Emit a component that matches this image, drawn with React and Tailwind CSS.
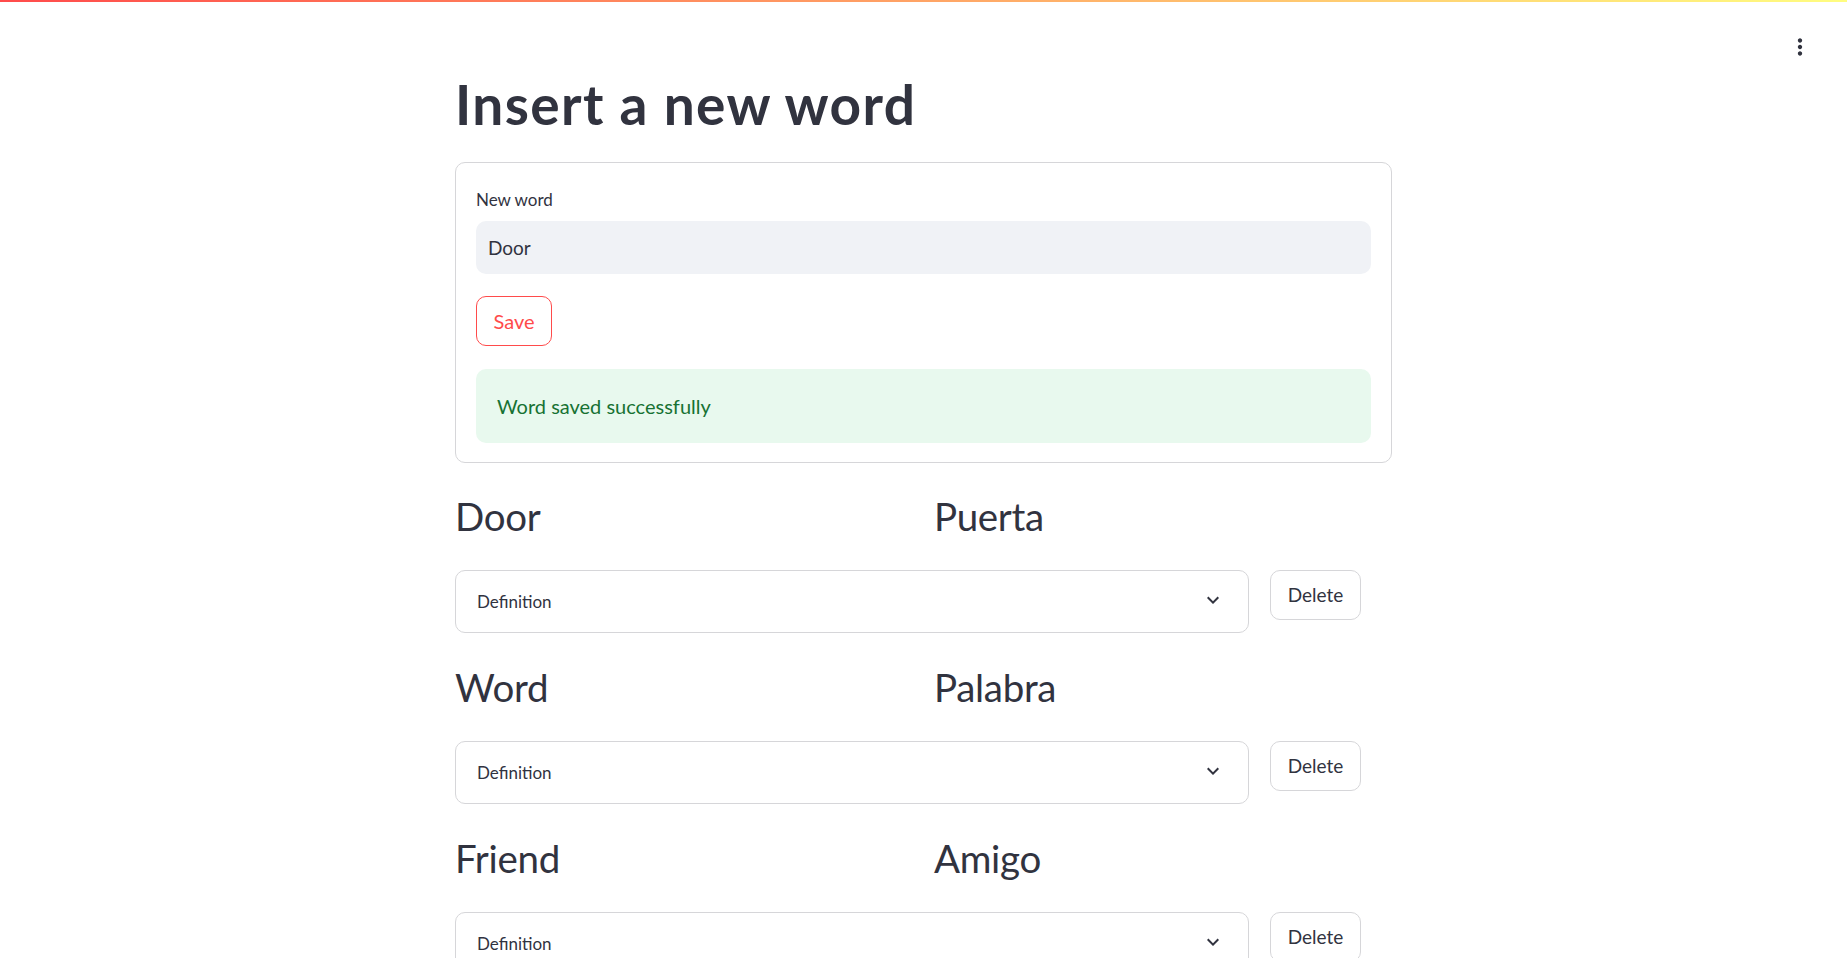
import { useState } from 'react';

const words = [
    { id: 1, word: 'Door', translation: 'Puerta' },
    { id: 2, word: 'Word', translation: 'Palabra' },
    { id: 3, word: 'Friend', translation: 'Amigo' }
];

function ChevronDown() {
    return (
        <svg width="24" height="24" viewBox="0 0 24 24" fill="#31333f" className="mb-[3px]">
            <path d="M16.59 8.59L12 13.17 7.41 8.59 6 10l6 6 6-6z" />
        </svg>
    );
}

function WordRow({ item }) {
    const [open, setOpen] = useState(false);

    return (
        <div className="flex flex-col gap-[29px]">
            <div className="grid grid-cols-2 gap-[21px]">
                <h2 className="text-[38.5px] leading-[50px] font-normal tracking-[-0.3px] text-[#31333f]">{item.word}</h2>
                <h2 className="text-[38.5px] leading-[50px] font-normal tracking-[-0.3px] text-[#31333f]">{item.translation}</h2>
            </div>
            <div className="flex items-start gap-[21px]">
                <div className="w-[794px] border border-[#d6d6d9] rounded-[10px]">
                    <button
                        type="button"
                        onClick={() => setOpen(!open)}
                        className="w-full h-[61px] flex items-center justify-between pl-[21px] pr-[23px]"
                    >
                        <span className="text-[17px] text-[#31333f]">Definition</span>
                        <ChevronDown />
                    </button>
                </div>
                <button
                    type="button"
                    className="w-[91px] h-[50px] border border-[#d6d6d9] rounded-[10px] text-[19px] text-[#31333f] bg-white"
                >
                    Delete
                </button>
            </div>
        </div>
    );
}

export default function App() {
    const [value, setValue] = useState('Door');

    return (
        <div className="relative h-[958px] overflow-hidden bg-white [font-family:Lato,sans-serif] text-[#31333f]">
            {/* header decoration + menu */}
            <div className="absolute top-0 left-0 right-0 h-[2px] bg-[linear-gradient(90deg,#ff4b4b,#fffd80)]" />
            <div className="absolute top-[34px] right-[34px]">
                <svg width="26" height="26" viewBox="0 0 24 24" fill="#31333f">
                    <path d="M12 8c1.1 0 2-.9 2-2s-.9-2-2-2-2 .9-2 2 .9 2 2 2zm0 2c-1.1 0-2 .9-2 2s.9 2 2 2 2-.9 2-2-.9-2-2-2zm0 6c-1.1 0-2 .9-2 2s.9 2 2 2 2-.9 2-2-.9-2-2-2z" />
                </svg>
            </div>

            <main className="w-[937px] mx-auto pt-[72px]">
                <h1 className="text-[55px] leading-[64px] font-bold tracking-[1.4px] text-[#31333f]">Insert a new word</h1>

                <div className="mt-[26px] border border-[#d6d6d9] rounded-[10px] px-[20px] pt-[20px] pb-[19px]">
                    <label className="block text-[17px] leading-[33px] mb-[5px] text-[#31333f]">New word</label>
                    <input
                        value={value}
                        onChange={(e) => setValue(e.target.value)}
                        className="w-full h-[53px] bg-[#f0f2f6] rounded-[10px] px-[12px] text-[19px] text-[#31333f] outline-none"
                    />
                    <button
                        type="button"
                        className="mt-[22px] w-[76px] h-[50px] border border-[#ff4b4b] rounded-[10px] text-[20px] text-[#ff4b4b] bg-white"
                    >
                        Save
                    </button>
                    <div className="mt-[23px] h-[74px] flex items-center px-[21px] bg-[#e8f9ee] rounded-[10px] text-[20px] text-[#177233]">
                        Word saved successfully
                    </div>
                </div>

                <div className="mt-[28px] flex flex-col gap-[29px]">
                    {words.map(item => (
                        <WordRow key={item.id} item={item} />
                    ))}
                </div>
            </main>
        </div>
    );
}
